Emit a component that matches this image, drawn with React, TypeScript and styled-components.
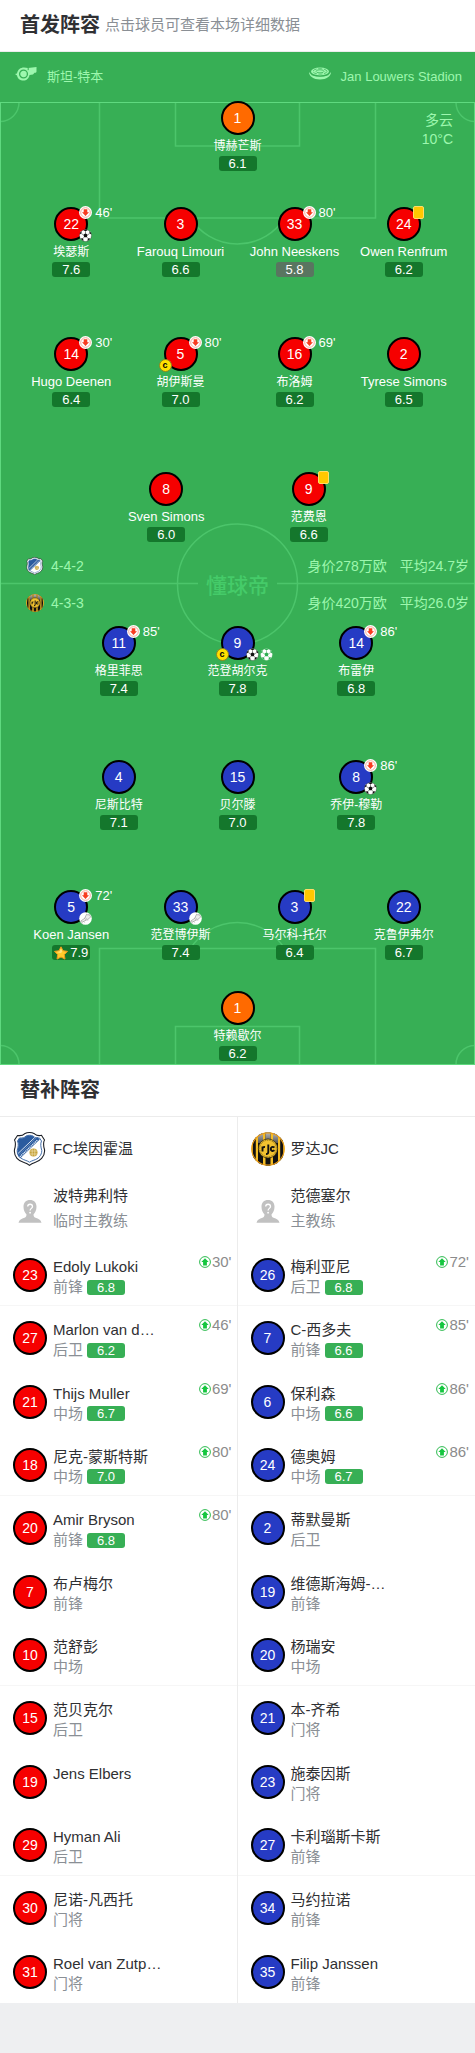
import React from 'react';
import styled, { createGlobalStyle } from 'styled-components';

const colors = {
  grass: '#37af55',
  line: '#4cc56b',
  edge: '#5fd97f',
  mint: '#9df7ae',
  red: '#f60000',
  blue: '#263bc4',
  orange: '#ff6a00',
  ink: '#2f3033',
  muted: '#8a8f95',
  rule: '#ececec',
};

const GlobalStyle = createGlobalStyle`
  * { box-sizing: border-box; }
  body {
    margin: 0;
    background: #eeeff1;
    color: ${colors.ink};
    font-family: "Liberation Sans", "Noto Sans CJK SC", sans-serif;
    font-size: 15px;
  }
`;

/* ---------- types and data ---------- */

type Side = 'home' | 'away' | 'keeper';

interface Starter {
  number: number;
  name: string;
  rating: string;
  off?: string;
  card?: boolean;
  captain?: boolean;
  best?: boolean;
  marks?: Array<'goal' | 'penalty' | 'assist'>;
}

interface Sub {
  number: number;
  name: string;
  position?: string;
  rating?: string;
  on?: string;
}

const homeRows: Starter[][] = [
  [
    { number: 22, name: '埃瑟斯', rating: '7.6', off: "46'", marks: ['goal'] },
    { number: 3, name: 'Farouq Limouri', rating: '6.6' },
    { number: 33, name: 'John Neeskens', rating: '5.8', off: "80'" },
    { number: 24, name: 'Owen Renfrum', rating: '6.2', card: true },
  ],
  [
    { number: 14, name: 'Hugo Deenen', rating: '6.4', off: "30'" },
    { number: 5, name: '胡伊斯曼', rating: '7.0', off: "80'", captain: true },
    { number: 16, name: '布洛姆', rating: '6.2', off: "69'" },
    { number: 2, name: 'Tyrese Simons', rating: '6.5' },
  ],
  [
    { number: 8, name: 'Sven Simons', rating: '6.0' },
    { number: 9, name: '范费恩', rating: '6.6', card: true },
  ],
];

const awayRows: Starter[][] = [
  [
    { number: 11, name: '格里菲思', rating: '7.4', off: "85'" },
    { number: 9, name: '范登胡尔克', rating: '7.8', captain: true, marks: ['goal', 'penalty'] },
    { number: 14, name: '布雷伊', rating: '6.8', off: "86'" },
  ],
  [
    { number: 4, name: '尼斯比特', rating: '7.1' },
    { number: 15, name: '贝尔滕', rating: '7.0' },
    { number: 8, name: '乔伊-穆勒', rating: '7.8', off: "86'", marks: ['goal'] },
  ],
  [
    { number: 5, name: 'Koen Jansen', rating: '7.9', off: "72'", best: true, marks: ['assist'] },
    { number: 33, name: '范登博伊斯', rating: '7.4', marks: ['assist'] },
    { number: 3, name: '马尔科-托尔', rating: '6.4', card: true },
    { number: 22, name: '克鲁伊弗尔', rating: '6.7' },
  ],
];

const homeSubs: Sub[] = [
  { number: 23, name: 'Edoly Lukoki', position: '前锋', rating: '6.8', on: "30'" },
  { number: 27, name: 'Marlon van d…', position: '后卫', rating: '6.2', on: "46'" },
  { number: 21, name: 'Thijs Muller', position: '中场', rating: '6.7', on: "69'" },
  { number: 18, name: '尼克-蒙斯特斯', position: '中场', rating: '7.0', on: "80'" },
  { number: 20, name: 'Amir Bryson', position: '前锋', rating: '6.8', on: "80'" },
  { number: 7, name: '布卢梅尔', position: '前锋' },
  { number: 10, name: '范舒彭', position: '中场' },
  { number: 15, name: '范贝克尔', position: '后卫' },
  { number: 19, name: 'Jens Elbers' },
  { number: 29, name: 'Hyman Ali', position: '后卫' },
  { number: 30, name: '尼诺-凡西托', position: '门将' },
  { number: 31, name: 'Roel van Zutp…', position: '门将' },
];

const awaySubs: Sub[] = [
  { number: 26, name: '梅利亚尼', position: '后卫', rating: '6.8', on: "72'" },
  { number: 7, name: 'C-西多夫', position: '前锋', rating: '6.6', on: "85'" },
  { number: 6, name: '保利森', position: '中场', rating: '6.6', on: "86'" },
  { number: 24, name: '德奥姆', position: '中场', rating: '6.7', on: "86'" },
  { number: 2, name: '蒂默曼斯', position: '后卫' },
  { number: 19, name: '维德斯海姆-…', position: '前锋' },
  { number: 20, name: '杨瑞安', position: '中场' },
  { number: 21, name: '本-齐希', position: '门将' },
  { number: 23, name: '施泰因斯', position: '门将' },
  { number: 27, name: '卡利瑙斯卡斯', position: '前锋' },
  { number: 34, name: '马约拉诺', position: '前锋' },
  { number: 35, name: 'Filip Janssen', position: '前锋' },
];

/* ---------- styled parts ---------- */

const SectionHead = styled.header`
  display: flex;
  align-items: center;
  gap: 5px;
  height: 52px;
  padding: 0 20px 2px;
  background: #fff;
  border-bottom: 1px solid ${colors.rule};
`;

const SectionTitle = styled.h2`
  margin: 0;
  font-size: 20px;
  line-height: 28px;
`;

const Hint = styled.span`
  color: ${colors.muted};
  line-height: 20px;
`;

const InfoBar = styled.div`
  display: flex;
  justify-content: space-between;
  align-items: center;
  height: 49px;
  padding: 0 13px 0 15px;
  background: ${colors.grass};
  color: ${colors.mint};
  font-size: 13px;
  line-height: 20px;

  svg {
    margin-bottom: 6px;
  }
`;

const InfoItem = styled.span`
  display: flex;
  align-items: center;
  gap: 10px;
`;

const Pitch = styled.div`
  position: relative;
  padding-bottom: 4px;
  background: ${colors.grass};
`;

const PitchLines = styled.svg`
  position: absolute;
  inset: 0;
  width: 100%;
  height: 100%;
`;

const Weather = styled.div`
  position: absolute;
  top: 10px;
  right: 22px;
  color: ${colors.mint};
  font-size: 14px;
  line-height: 19px;
  text-align: right;
`;

const Line = styled.div<{ $gap?: number }>`
  position: relative;
  display: flex;
  justify-content: center;
  margin-top: ${(p) => p.$gap ?? 0}px;
`;

const cellWidth: Record<number, string> = { 1: '30%', 2: '30%', 3: '25%', 4: '23%' };

const PlayerButton = styled.button<{ $count: number }>`
  display: flex;
  flex-direction: column;
  align-items: center;
  width: ${(p) => cellWidth[p.$count]};
  margin: 0;
  padding: 0;
  border: 0;
  background: none;
  color: #fff;
  font: inherit;
  cursor: pointer;

  &:nth-child(3) {
    margin-left: ${(p) => (p.$count === 4 ? '1%' : '0')};
  }
`;

const shirt: Record<Side, string> = {
  home: colors.red,
  away: colors.blue,
  keeper: colors.orange,
};

const Disc = styled.span<{ $side: Side }>`
  position: relative;
  display: flex;
  flex: none;
  align-items: center;
  justify-content: center;
  width: 34px;
  height: 34px;
  border: 2px solid #000;
  border-radius: 50%;
  background: ${(p) => shirt[p.$side]};
  color: #fff;
  font-size: 14px;
  line-height: 16px;
`;

/* Han glyphs fill more of the em box than Latin ones, so Latin names are set a size larger. */
const PlayerName = styled.span<{ $latin: boolean }>`
  padding-top: 1px;
  font-size: ${(p) => (p.$latin ? 13 : 12)}px;
  line-height: 20px;
  white-space: nowrap;
`;

type Tone = 'dark' | 'low' | 'light';
const tones: Record<Tone, string> = { dark: '#14772c', low: '#597560', light: colors.grass };

const Rating = styled.span<{ $tone: Tone }>`
  display: flex;
  align-items: center;
  justify-content: center;
  gap: 2px;
  width: 38px;
  height: 15px;
  border-radius: 3px;
  background: ${(p) => tones[p.$tone]};
  color: #fff;
  font-size: 13px;
  line-height: 15px;
`;

const OffMark = styled.span`
  position: absolute;
  top: -3px;
  left: 23px;
  display: flex;
  align-items: center;
  gap: 3px;
  font-size: 13px;
  line-height: 13px;
`;

const Card = styled.span`
  position: absolute;
  top: -3px;
  left: 24px;
  width: 11px;
  height: 13px;
  border: 1px solid #ffdc6a;
  border-radius: 2px;
  background: #ffc800;
`;

const Captain = styled.span`
  position: absolute;
  top: 20px;
  left: -7px;
  width: 13px;
  height: 13px;
  border: 1px solid #8f8420;
  border-radius: 50%;
  background: #ffe100;
  color: #000;
  font-size: 9px;
  font-weight: 700;
  line-height: 10px;
  text-align: center;
`;

const Marks = styled.span`
  position: absolute;
  top: 20px;
  left: 23px;
  display: flex;
  gap: 1px;
`;

const Middle = styled.div`
  position: relative;
  padding: 5px 0;
`;

const TeamLine = styled.div`
  display: flex;
  align-items: center;
  gap: 7px;
  height: 37px;
  padding: 0 6px 0 26px;
  color: ${colors.mint};
  font-size: 14px;
  line-height: 20px;
`;

const TeamFacts = styled.span`
  display: flex;
  gap: 13px;
  margin-left: auto;
`;

const Wordmark = styled.span`
  position: absolute;
  inset: 0;
  display: flex;
  align-items: center;
  justify-content: center;
  color: #45cb69;
  font-family: "Noto Sans CJK SC", sans-serif;
  font-size: 21px;
  font-weight: 500;
  line-height: 24px;
`;

const Bench = styled.div`
  display: grid;
  grid-template-columns: 1fr 1fr;
  background: #fff;
`;

const Column = styled.section`
  display: flex;
  flex-direction: column;
  min-width: 0;

  & + & {
    box-shadow: -1px 0 0 ${colors.rule};
  }
`;

const Person = styled.div<{ $height: number }>`
  display: flex;
  align-items: center;
  gap: 6px;
  height: ${(p) => p.$height}px;
  padding-left: 13px;
`;

const Club = styled.h3`
  margin: 0;
  font-size: 15px;
  font-weight: 400;
  line-height: 20px;
`;

const CoachText = styled.div`
  line-height: 25px;
  padding-bottom: 8px;
`;

const Role = styled.div`
  color: ${colors.muted};
`;

const SubList = styled.ul`
  display: grid;
  grid-auto-rows: 1fr;
  min-height: 760px;
  margin: 0;
  padding: 0;
  list-style: none;
`;

const SubItem = styled.li`
  &:nth-child(3n + 1) {
    border-bottom: 1px solid #f6f6f6;
  }
`;

const SubLink = styled.a`
  display: flex;
  gap: 6px;
  padding: 15px 6px 0 13px;
  color: inherit;
  text-decoration: none;
`;

const SubText = styled.span`
  flex: 1;
  min-width: 0;
  white-space: nowrap;
`;

const SubName = styled.span`
  display: block;
  line-height: 18px;
`;

const SubMeta = styled.span`
  display: flex;
  align-items: center;
  gap: 4px;
  height: 22px;
  color: ${colors.muted};
  line-height: 22px;
`;

const OnMark = styled.span`
  display: flex;
  align-items: center;
  align-self: flex-start;
  gap: 1px;
  height: 12px;
  margin-top: -2px;
  color: #8b8b8b;
  line-height: 12px;
`;

/* ---------- drawings ---------- */

const Whistle = () => (
  <svg width="22" height="14" viewBox="0 0 22 14" aria-hidden="true">
    <path
      fill={colors.mint}
      d="M0 7l2-.5C2.800 2.500 5.500.5 9 .5L13 1l8.500-1v4.500c0 1-1 1.500-2 1.200l-1.500 1.800L14.500 8c-.5 3.500-3 5.500-6 5.500C5 13.500 2.500 11.500 2 8.500z"
    />
    <circle cx="8.500" cy="7" r="3.900" fill={colors.mint} stroke={colors.grass} strokeWidth="1.300" />
    <path d="M13.200.6v2.600" stroke={colors.grass} strokeWidth="1" />
  </svg>
);

const Stadium = () => (
  <svg width="22" height="13" viewBox="0 0 22 13" aria-hidden="true">
    <path fill={colors.mint} d="M0 5C2 8.300 6 9.800 11 9.800S20 8.300 22 5c0 4.300-4.500 7.500-11 7.500S0 9.300 0 5z" />
    <ellipse cx="11" cy="4.500" rx="9" ry="3.900" fill={colors.mint} />
    <ellipse cx="11" cy="4.400" rx="7" ry="2.700" fill="none" stroke={colors.grass} strokeWidth=".7" strokeDasharray="4 1.500" />
    <ellipse cx="11" cy="4.300" rx="4" ry="1.500" fill="none" stroke={colors.grass} strokeWidth=".7" />
    <path d="M2 7.500C5 9.500 17 9.500 20 7.500" fill="none" stroke={colors.grass} strokeWidth=".5" />
  </svg>
);

const DownArrow = () => (
  <svg width="13" height="13" viewBox="0 0 13 13" aria-hidden="true">
    <circle cx="6.500" cy="6.500" r="6.500" fill="#fff" />
    <circle cx="6.500" cy="6.500" r="4.800" fill="none" stroke="#f5856f" strokeWidth=".7" />
    <path fill="#f83c20" d="M4.700 3.200h3.600v3H10L6.500 10 3 6.200h1.700z" />
  </svg>
);

const UpArrow = () => (
  <svg width="12" height="12" viewBox="0 0 12 12" aria-hidden="true">
    <circle cx="6" cy="6" r="5.400" fill="#fff" stroke="#2fba50" strokeWidth="1" />
    <path fill="#15c63f" d="M6 2.300l3.700 3.600H7.900v3.600H4.100V5.900H2.300z" />
  </svg>
);

const Ball = ({ tint }: { tint: string }) => (
  <svg width="13" height="13" viewBox="0 0 13 13" aria-hidden="true">
    <circle cx="6.500" cy="6.500" r="6" fill="#fff" stroke={tint} strokeOpacity=".5" strokeWidth=".6" />
    <g fill={tint}>
      <path d="M6.500 4.300l2.100 1.500-.8 2.500H5.200l-.8-2.500z" />
      <path d="M4.400 1.200l2.100 1.100 2.100-1.100-.7-.5H5z" />
      <path d="M.7 5.200l1.700-.6.3-2.200-.5.100C1.300 3.200.8 4.200.7 5.200z" />
      <path d="M12.300 5.200l-1.700-.6-.3-2.200.5.100c.9.700 1.400 1.700 1.500 2.700z" />
      <path d="M1.600 9.400l2.300-.1.800 2.400c-1.300-.4-2.400-1.200-3.100-2.300z" />
      <path d="M11.400 9.400l-2.300-.1-.8 2.400c1.300-.4 2.400-1.200 3.100-2.300z" />
    </g>
    <path d="M6.500 4.300v-2M8.600 5.800l2-1.200M7.800 8.300l1.300 1M5.200 8.300l-1.300 1M4.400 5.800l-2-1.200" stroke={tint} strokeWidth=".5" />
  </svg>
);

const Boot = () => (
  <svg width="13" height="13" viewBox="0 0 13 13" aria-hidden="true">
    <circle cx="6.500" cy="6.500" r="6.300" fill="#fff" />
    <path
      d="M7.600 2.200c.8.700 1.800.8 2.700.2l1.200 2.300c-.6 1.500-1.800 2.300-3.200 2.800L3.600 10c-1.200.4-2-.2-1.900-1l4-2.600z"
      fill="#ededed"
      stroke="#888"
      strokeWidth=".6"
    />
    <path d="M5.500 6.500l1.200 1.200M6.400 5.600l1.200 1.200M3 10.600l.5.800M5.200 9.800l.5.800M8.500 8l.4.700" stroke="#888" strokeWidth=".5" />
  </svg>
);

const Star = () => (
  <svg width="14" height="14" viewBox="0 0 14 14" aria-hidden="true">
    <path
      d="M7 .8l2 3.900 4.500.7-3.200 3.200.7 4.500-4-2.100-4 2.100.7-4.500L.5 5.400 5 4.700z"
      fill="#ffcb2b"
      stroke="#f09a1c"
      strokeWidth="1"
      strokeLinejoin="round"
    />
    <path d="M7 2.300l1.300 3L7 7.200 2.600 6l2.900-.6z" fill="#ffe27a" />
  </svg>
);

const EindhovenCrest = ({ size }: { size: number }) => (
  <svg width={size} height={size} viewBox="0 0 34 34" aria-hidden="true">
    <path
      d="M4.500 3.500C8 4 10 3.500 11.500 1.800 14.500.3 18.500.3 21.500 1.800 23.500 3.500 26 4 28.500 3.300L31.500 8c-1.800 3-1 6 0 9.500C32.500 25 26 29.500 22 30.500c-2 .6-4 1.500-5.500 2.800-1.500-1.300-3.500-2.200-5.500-2.800C6 29.300.5 25 1.500 17.500c1-3.500 1.800-6.500 0-9.500z"
      fill="#fff"
      stroke="#1c1f26"
      strokeWidth="1.100"
    />
    <path
      d="M6.500 6C9.500 6.200 12 5.500 13 4c2.500-1 5-1 7 0 1.500 1.600 4 2.300 6.500 2L28.500 9c-1.300 3-.7 6 .3 9.500 0 5-3.800 8.500-8 9.700-1.600.5-3 1.200-4.300 2-1.300-.8-2.700-1.500-4.300-2C8 27 4 23.500 4.200 18.500 5.200 15 5.800 12 4.500 9z"
      fill="#fff"
      stroke="#2c5c9f"
      strokeWidth=".9"
    />
    <path
      d="M6.500 6.300C9.500 6.500 12 5.800 13 4.300c2.500-1 5-1 7 0 .8.900 1.800 1.500 3 1.900L5 23.500c-.5-1.500-.8-3-.5-5C5.500 15 6 12 4.800 9z"
      fill="#2a5b9f"
    />
    <path d="M25.500 6.300L6 25" stroke="#2a5b9f" strokeWidth="3.600" />
    <path d="M24.300 8.200L6.800 24.900" stroke="#dce6f2" strokeWidth="1.500" strokeDasharray="1.200 .7" />
    <path d="M21.600 5.600L5 21.500" stroke="#fff" strokeWidth=".8" />
    <circle cx="20.500" cy="20.500" r="4" fill="#c5a23b" />
    <path d="M17 19h7M17 22h7M19.200 17v7M21.800 17v7" stroke="#f4e8bd" strokeWidth=".6" />
  </svg>
);

const RodaCrest = ({ size }: { size: number }) => (
  <svg width={size} height={size} viewBox="0 0 34 34" aria-hidden="true">
    <defs>
      <clipPath id={`roda-${size}`}>
        <circle cx="17" cy="17" r="16.800" />
      </clipPath>
      <linearGradient id={`shine-${size}`} x1="0" y1="0" x2="0" y2="1">
        <stop offset="0" stopColor="#bdbdbd" />
        <stop offset="1" stopColor="#555" />
      </linearGradient>
    </defs>
    <g clipPath={`url(#roda-${size})`}>
      <rect width="34" height="34" fill="#f4bd25" />
      <path d="M1.800 0h3v34h-3zM7 0h5v34H7zM14.500 0h5v34h-5zM22 0h5v34h-5zM29.200 0h3v34h-3z" fill="#111" />
      <path d="M7 0h5v11H7zM14.500 0h5v9h-5zM22 0h5v11h-5z" fill={`url(#shine-${size})`} />
      <circle cx="17" cy="17" r="16.200" fill="none" stroke="#e79a1b" strokeWidth="1.200" />
    </g>
    <circle cx="17" cy="16.500" r="9.600" fill="#f2c230" stroke="#221c08" strokeWidth=".7" />
    <circle cx="17" cy="16.500" r="8.300" fill="none" stroke="#6b5818" strokeWidth=".8" strokeDasharray="1 .8" />
    <path
      d="M11.500 19.500v-5M11.500 16.800c.2-1.500 1-2 2.500-1.700M17.300 12.500v7.300c0 1.700-.8 2.300-2.300 2.200M23.500 15.500c-2-1.300-3.700-.4-3.700 1.400s1.800 2.700 3.700 1.400"
      fill="none"
      stroke="#111"
      strokeWidth="1.900"
    />
  </svg>
);

const Silhouette = () => (
  <svg width="34" height="34" viewBox="0 0 34 34" aria-hidden="true">
    <path
      d="M17 5c4 0 6.500 2.700 6.500 6.800 0 3.400-1.400 6-3 7.700 0 1.500.5 2.600 2 3.200 3 1.200 5.300 2 6 5h-23c.7-3 3-3.800 6-5 1.500-.6 2-1.700 2-3.200-1.600-1.700-3-4.300-3-7.700C10.500 7.700 13 5 17 5z"
      fill="#c1c1c1"
    />
    <path d="M14.700 11.500c0-3 4.800-3 4.800 0 0 1.800-2.400 2-2.400 4" fill="none" stroke="#fff" strokeWidth="1.300" />
    <circle cx="17.100" cy="17.700" r=".9" fill="#fff" />
  </svg>
);

const PitchMarkings = () => (
  <PitchLines viewBox="0 0 475 964" preserveAspectRatio="none" aria-hidden="true">
    <g fill="none" stroke={colors.line} strokeWidth="1.500">
      <path d="M99.500 1v116h276V1M175.500 1v44h124V1" />
      <path d="M190.500 117a55.500 55.500 0 0 0 94 0" />
      <path d="M99.500 963V847.500h276V963M175.500 963v-37.500h124V963" />
      <path d="M190.500 847.500a55.500 55.500 0 0 1 94 0" />
      <path d="M0 20.500a19 19 0 0 0 19-19M475 20.500a19 19 0 0 1-19-19M0 944.500a19 19 0 0 1 19 19M475 944.500a19 19 0 0 0-19 19" />
      <circle cx="237.500" cy="483" r="60" />
      <path d="M0 482.500h198M277 482.500h198" />
    </g>
    <rect x=".5" y="1.500" width="474" height="962" fill="none" stroke={colors.edge} />
  </PitchLines>
);

/* ---------- components ---------- */

const Player = ({ player, side, count }: { player: Starter; side: Side; count: number }) => (
  <PlayerButton type="button" $count={count}>
    <Disc $side={side}>
      {player.number}
      {player.off && (
        <OffMark>
          <DownArrow />
          {player.off}
        </OffMark>
      )}
      {player.card && <Card />}
      {player.captain && <Captain>c</Captain>}
      {player.marks && (
        <Marks>
          {player.marks.map((mark) =>
            mark === 'assist' ? <Boot key={mark} /> : <Ball key={mark} tint={mark === 'goal' ? '#111' : '#2fae52'} />,
          )}
        </Marks>
      )}
    </Disc>
    <PlayerName $latin={/^[A-Z]/.test(player.name)}>{player.name}</PlayerName>
    <Rating $tone={Number(player.rating) < 6 ? 'low' : 'dark'}>
      {player.best && <Star />}
      {player.rating}
    </Rating>
  </PlayerButton>
);

const PlayerLine = ({ players, side, gap }: { players: Starter[]; side: Side; gap?: number }) => (
  <Line $gap={gap}>
    {players.map((p) => (
      <Player key={p.number} player={p} side={side} count={players.length} />
    ))}
  </Line>
);

interface BenchColumnProps {
  crest: React.ReactNode;
  club: string;
  coach: string;
  role: string;
  side: Side;
  subs: Sub[];
}

const BenchColumn = ({ crest, club, coach, role, side, subs }: BenchColumnProps) => (
  <Column>
    <Person $height={63}>
      {crest}
      <Club>{club}</Club>
    </Person>
    <Person $height={63}>
      <Silhouette />
      <CoachText>
        <div>{coach}</div>
        <Role>{role}</Role>
      </CoachText>
    </Person>
    <SubList>
      {subs.map((sub) => (
        <SubItem key={sub.number}>
          <SubLink href="#">
            <Disc $side={side}>{sub.number}</Disc>
            <SubText>
              <SubName>{sub.name}</SubName>
              <SubMeta>
                {sub.position}
                {sub.rating && <Rating $tone="light">{sub.rating}</Rating>}
              </SubMeta>
            </SubText>
            {sub.on && (
              <OnMark>
                <UpArrow />
                {sub.on}
              </OnMark>
            )}
          </SubLink>
        </SubItem>
      ))}
    </SubList>
  </Column>
);

export default function App() {
  return (
    <main>
      <GlobalStyle />
      <SectionHead>
        <SectionTitle>首发阵容</SectionTitle>
        <Hint>点击球员可查看本场详细数据</Hint>
      </SectionHead>
      <InfoBar>
        <InfoItem>
          <Whistle />
          斯坦-特本
        </InfoItem>
        <InfoItem>
          <Stadium />
          Jan Louwers Stadion
        </InfoItem>
      </InfoBar>
      <Pitch>
        <PitchMarkings />
        <Weather>
          <div>多云</div>
          <div>10°C</div>
        </Weather>
        <PlayerLine side="keeper" players={[{ number: 1, name: '博赫芒斯', rating: '6.1' }]} />
        <PlayerLine side="home" gap={36} players={homeRows[0]} />
        <PlayerLine side="home" gap={60} players={homeRows[1]} />
        <PlayerLine side="home" gap={65} players={homeRows[2]} />
        <Middle>
          <Wordmark>懂球帝</Wordmark>
          <TeamLine>
            <EindhovenCrest size={18} />
            4-4-2
            <TeamFacts>
              <span>身价278万欧</span>
              <span>平均24.7岁</span>
            </TeamFacts>
          </TeamLine>
          <TeamLine>
            <RodaCrest size={18} />
            4-3-3
            <TeamFacts>
              <span>身价420万欧</span>
              <span>平均26.0岁</span>
            </TeamFacts>
          </TeamLine>
        </Middle>
        <PlayerLine side="away" players={awayRows[0]} />
        <PlayerLine side="away" gap={64} players={awayRows[1]} />
        <PlayerLine side="away" gap={60} players={awayRows[2]} />
        <PlayerLine side="keeper" gap={31} players={[{ number: 1, name: '特赖歇尔', rating: '6.2' }]} />
      </Pitch>
      <SectionHead>
        <SectionTitle>替补阵容</SectionTitle>
      </SectionHead>
      <Bench>
        <BenchColumn
          crest={<EindhovenCrest size={34} />}
          club="FC埃因霍温"
          coach="波特弗利特"
          role="临时主教练"
          side="home"
          subs={homeSubs}
        />
        <BenchColumn
          crest={<RodaCrest size={34} />}
          club="罗达JC"
          coach="范德塞尔"
          role="主教练"
          side="away"
          subs={awaySubs}
        />
      </Bench>
    </main>
  );
}
